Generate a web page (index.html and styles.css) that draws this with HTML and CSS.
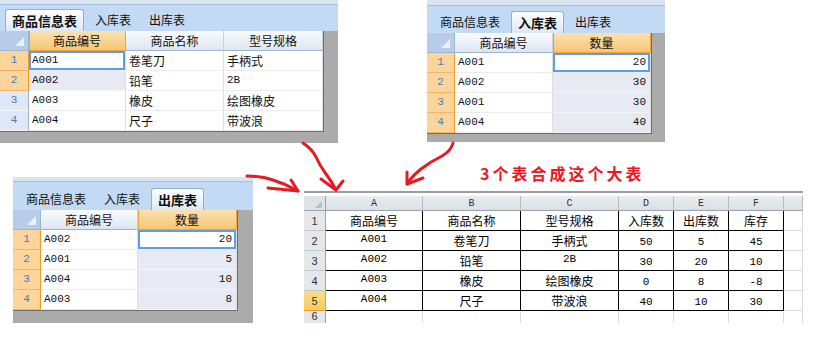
FILE: index.html
```html
<!DOCTYPE html>
<html lang="zh">
<head>
<meta charset="utf-8">
<title>3个表合成这个大表</title>
<link rel="stylesheet" href="styles.css">
</head>
<body>
<div class="win w1">
  <div class="strip"></div>
  <div class="tabs"><span class="tab on">商品信息表</span><span class="tab">入库表</span><span class="tab">出库表</span></div>
  <div class="grid g1">
    <div class="corner"></div><div class="hd sel">商品编号</div><div class="hd">商品名称</div><div class="hd">型号规格</div>
    <div class="rh sel">1</div><div class="c n act">A001</div><div class="c">卷笔刀</div><div class="c">手柄式</div>
    <div class="rh sel">2</div><div class="c n s">A002</div><div class="c">铅笔</div><div class="c n">2B</div>
    <div class="rh">3</div><div class="c n">A003</div><div class="c">橡皮</div><div class="c">绘图橡皮</div>
    <div class="rh">4</div><div class="c n">A004</div><div class="c">尺子</div><div class="c">带波浪</div>
  </div>
</div>

<div class="win w2">
  <div class="strip"></div>
  <div class="tabs"><span class="tab">商品信息表</span><span class="tab on">入库表</span><span class="tab">出库表</span></div>
  <div class="grid g2">
    <div class="corner"></div><div class="hd">商品编号</div><div class="hd sel">数量</div>
    <div class="rh sel">1</div><div class="c n">A001</div><div class="c n r act">20</div>
    <div class="rh sel">2</div><div class="c n">A002</div><div class="c n r s">30</div>
    <div class="rh sel">3</div><div class="c n">A001</div><div class="c n r s">30</div>
    <div class="rh sel">4</div><div class="c n">A004</div><div class="c n r s">40</div>
  </div>
</div>

<div class="win w3">
  <div class="strip"></div>
  <div class="tabs"><span class="tab">商品信息表</span><span class="tab">入库表</span><span class="tab on">出库表</span></div>
  <div class="grid g3">
    <div class="corner"></div><div class="hd">商品编号</div><div class="hd sel">数量</div>
    <div class="rh sel">1</div><div class="c n">A002</div><div class="c n r act">20</div>
    <div class="rh sel">2</div><div class="c n">A001</div><div class="c n r s">5</div>
    <div class="rh sel">3</div><div class="c n">A004</div><div class="c n r s">10</div>
    <div class="rh sel">4</div><div class="c n">A003</div><div class="c n r s">8</div>
  </div>
</div>

<div class="title">3个表合成这个大表</div>

<div class="xl">
  <div class="xl-top"></div>
  <div class="xg">
    <div class="xcorner"></div><div class="xh">A</div><div class="xh">B</div><div class="xh">C</div><div class="xh">D</div><div class="xh">E</div><div class="xh">F</div><div class="xh"></div>

    <div class="xr">1</div><div class="xc t">商品编号</div><div class="xc t">商品名称</div><div class="xc t">型号规格</div><div class="xc t">入库数</div><div class="xc t">出库数</div><div class="xc t">库存</div><div class="xc"></div>

    <div class="xr">2</div><div class="xc t n">A001</div><div class="xc t">卷笔刀</div><div class="xc t">手柄式</div><div class="xc t n d">50</div><div class="xc t n d">5</div><div class="xc t n d">45</div><div class="xc"></div>

    <div class="xr">3</div><div class="xc t n">A002</div><div class="xc t">铅笔</div><div class="xc t n">2B</div><div class="xc t n d">30</div><div class="xc t n d">20</div><div class="xc t n d">10</div><div class="xc"></div>

    <div class="xr">4</div><div class="xc t n">A003</div><div class="xc t">橡皮</div><div class="xc t">绘图橡皮</div><div class="xc t n d">0</div><div class="xc t n d">8</div><div class="xc t n d">-8</div><div class="xc"></div>

    <div class="xr sel">5</div><div class="xc t n">A004</div><div class="xc t">尺子</div><div class="xc t">带波浪</div><div class="xc t n d">40</div><div class="xc t n d">10</div><div class="xc t n d">30</div><div class="xc"></div>

    <div class="xr last">6</div><div class="xc"></div><div class="xc"></div><div class="xc"></div><div class="xc"></div><div class="xc"></div><div class="xc"></div><div class="xc"></div>
  </div>
</div>

<svg class="arrows" width="821" height="341" viewBox="0 0 821 341" xmlns="http://www.w3.org/2000/svg">
  <g fill="none" stroke="#e31b23" stroke-width="3" stroke-linecap="round" stroke-linejoin="round">
    <path d="M303 143 Q312 149 316 157 Q320 166 326 174 Q332 182 336 190"/>
    <path d="M321 179 L336 190 L343 181"/>
    <path d="M453 143 Q451 151 442 156 Q430 162 421 169 Q412 176 407 184"/>
    <path d="M407 172 L407 184 L423 178"/>
    <path d="M247 176 Q262 176 273 180 Q286 184 298 191"/>
    <path d="M291 180 L298 191 L268 188"/>
  </g>
</svg>
</body>
</html>
```

FILE: styles.css
```css
html, body {
  margin: 0;
  padding: 0;
}
body {
  width: 821px;
  height: 341px;
  position: relative;
  overflow: hidden;
  background: #ffffff;
  font-family: "Noto Sans CJK SC", sans-serif;
  color: #111;
}

/* ---------- small spreadsheet windows ---------- */
.win {
  position: absolute;
  background: #ababab;
  display: flex;
  flex-direction: column;
}
.w1 { left: 0; top: 0; width: 338px; height: 143px; }
.w2 { left: 427px; top: 0; width: 238px; height: 142px; }
.w3 { left: 13px; top: 177px; width: 240px; height: 146px; }

.strip {
  flex: none;
  height: 4px;
  background: #dae5f1;
  border-bottom: 1px solid #a6bfdc;
}
.w2 .strip { height: 5px; }

.tabs {
  flex: none;
  height: 26px;
  background: #c3daf5;
  display: flex;
  align-items: flex-end;
  padding-left: 4px;
}
.w2 .tabs { height: 27px; }
.w3 .tabs { height: 28px; }

.tab {
  box-sizing: border-box;
  height: 22px;
  padding: 0 9px;
  font-size: 12px;
  line-height: 22px;
  color: #111;
  white-space: nowrap;
}
.tab.on {
  font-weight: 700;
  font-size: 13px;
  line-height: 21px;
  padding: 0 6px;
  margin: 0 2px;
  background: linear-gradient(#fdfeff, #dce8f6);
  border: 1px solid #8eb0d9;
  border-bottom: none;
  border-radius: 3px 3px 0 0;
}
.w1 .tab.on { margin-left: 1px; }

.grid {
  flex: none;
  align-self: flex-start;
  display: grid;
  grid-auto-rows: 20px;
  border-right: 1px solid #6e6e6e;
  border-bottom: 1px solid #6e6e6e;
}
.g1 { grid-template-columns: 29px 97px 98px 99px; }
.g2 { grid-template-columns: 28px 98px 98px; }
.g3 { grid-template-columns: 28px 97px 99px; }

.grid > div {
  box-sizing: border-box;
  font-size: 12px;
  line-height: 19px;
  white-space: nowrap;
  overflow: hidden;
}

.corner {
  position: relative;
  background: #b6cce8;
  border-right: 1px solid #9db4cd;
  border-bottom: 1px solid #9db4cd;
}
.corner::after {
  content: "";
  position: absolute;
  right: 4px;
  bottom: 4px;
  width: 0;
  height: 0;
  border-left: 9px solid transparent;
  border-bottom: 9px solid #e9f0f9;
}

.hd {
  text-align: center;
  background: linear-gradient(#f9fbfd, #dde6f1);
  border-right: 1px solid #c2d2e4;
  border-bottom: 1px solid #9db4cd;
}
.hd.sel {
  background: linear-gradient(#fbe2b0, #f6c674);
  border-right: 1px solid #f2a43a;
  border-bottom: 1px solid #f2a43a;
  box-shadow: inset 1px 0 0 #f2a43a;
}

.rh {
  text-align: center;
  font-family: "Liberation Mono", monospace;
  font-size: 11px !important;
  color: #4a7dbd;
  background: #dfe8f4;
  border-right: 1px solid #9db4cd;
  border-bottom: 1px solid #f3f6fa;
}
.rh.sel {
  background: #fdd49a;
  border-right: 1px solid #f29b2b;
  border-bottom: 1px solid #f2b564;
}

.c {
  background: #ffffff;
  padding-left: 3px;
  border-right: 1px solid #dedede;
  border-bottom: 1px solid #ececec;
}
.n {
  font-family: "Liberation Mono", monospace;
  font-size: 11px !important;
}
.c.r { text-align: right; padding-left: 0; padding-right: 4px; }
.c.s { background: #e7eaf3; border-bottom-color: #f4f5f9; }
.c.act { box-shadow: inset 0 0 0 2px #5e9ce7; }

/* ---------- title ---------- */
.title {
  position: absolute;
  left: 480px;
  top: 162px;
  font-size: 16px;
  line-height: 22px;
  font-weight: 700;
  letter-spacing: 3px;
  color: #ec1624;
  white-space: nowrap;
}

/* ---------- Excel-like big sheet ---------- */
.xl {
  position: absolute;
  left: 304px;
  top: 191px;
  width: 499px;
  height: 132px;
  overflow: hidden;
  background: #ffffff;
}
.xl-top {
  height: 2px;
  background: #9c9c9c;
  margin-bottom: 3px;
}
.xg {
  display: grid;
  grid-template-columns: 22px 97px 98px 98px 55px 55px 55px 19px;
  grid-template-rows: 15px repeat(6, 20px);
}
.xg > div {
  box-sizing: border-box;
  white-space: nowrap;
  overflow: hidden;
}
.xcorner {
  position: relative;
  background: #dfe3e8;
  border-right: 1px solid #9da3ab;
  border-bottom: 1px solid #9da3ab;
}
.xcorner::after {
  content: "";
  position: absolute;
  right: 3px;
  bottom: 2px;
  border-left: 7px solid transparent;
  border-bottom: 7px solid #b9bec5;
}
.xh {
  display: flex;
  align-items: center;
  justify-content: center;
  background: linear-gradient(#e9ecf0, #dbe0e6);
  border-right: 1px solid #b6bcc4;
  border-bottom: 1px solid #9da3ab;
  font-family: "Liberation Mono", monospace;
  font-size: 10px;
  color: #333;
}
.xr {
  display: flex;
  align-items: flex-end;
  justify-content: center;
  padding-bottom: 2px;
  background: #e4e7ec;
  border-right: 1px solid #9da3ab;
  border-bottom: 1px solid #c5cad0;
  font-family: "Liberation Sans", sans-serif;
  font-size: 11px;
  line-height: 14px;
  color: #333;
}
.xr.last {
  align-items: flex-start;
  padding-bottom: 0;
  padding-top: 0;
  line-height: 11px;
}
.xr.sel {
  background: linear-gradient(#fbdd88, #f6cc5e);
  border-right-color: #e0a21c;
  border-bottom-color: #e0a21c;
}
.xc {
  display: flex;
  align-items: flex-end;
  justify-content: center;
  padding-bottom: 2px;
  border-right: 1px solid #d9d9d9;
  border-bottom: 1px solid #d9d9d9;
  font-size: 12px;
  line-height: 14px;
  color: #000;
}
.xc.t {
  border-right-color: #000;
  border-bottom-color: #000;
}
.xc.n { padding-bottom: 4px; }
.xc.d { padding-bottom: 1px; }

.arrows {
  position: absolute;
  left: 0;
  top: 0;
  pointer-events: none;
}
```
